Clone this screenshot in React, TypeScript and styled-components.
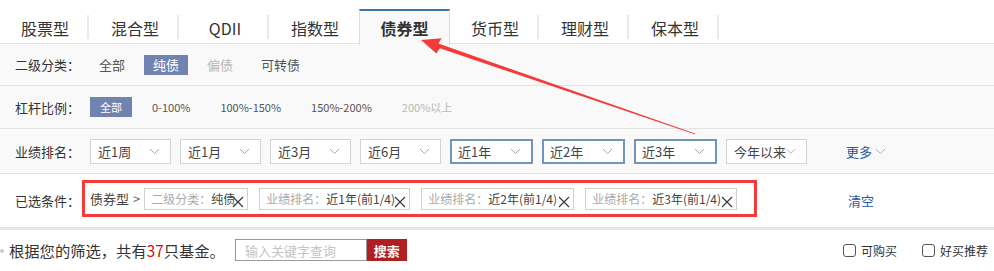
import React from 'react';
import styled, { createGlobalStyle } from 'styled-components';

const GlobalStyle = createGlobalStyle`
  body {
    margin: 0;
    background: #fff;
    font-family: "Noto Sans CJK SC", "Noto Sans", "Liberation Sans", sans-serif;
    color: #333;
  }
`;

const tabs = ['股票型', '混合型', 'QDII', '指数型', '债券型', '货币型', '理财型', '保本型'];
const activeTab = 4;

const subTypes = [
  { text: '全部' },
  { text: '纯债', active: true },
  { text: '偏债', disabled: true },
  { text: '可转债' },
];

const levers = [
  { text: '全部', active: true },
  { text: '0-100%' },
  { text: '100%-150%' },
  { text: '150%-200%' },
  { text: '200%以上', disabled: true },
];

const ranks = [
  { text: '近1周' },
  { text: '近1月' },
  { text: '近3月' },
  { text: '近6月' },
  { text: '近1年', active: true },
  { text: '近2年', active: true },
  { text: '近3年', active: true },
  { text: '今年以来' },
];

const chosen = [
  { label: '二级分类：', value: '纯债', width: 104 },
  { label: '业绩排名：', value: '近1年(前1/4)', width: 151 },
  { label: '业绩排名：', value: '近2年(前1/4)', width: 153 },
  { label: '业绩排名：', value: '近3年(前1/4)', width: 152 },
];

function Chevron({ color = '#aaa' }: { color?: string }) {
  return (
    <svg width="11" height="7" viewBox="0 0 11 7">
      <path d="M1 1 L5.5 5.5 L10 1" fill="none" stroke={color} strokeWidth="1" />
    </svg>
  );
}

function Cross() {
  return (
    <svg width="12" height="12" viewBox="0 0 12 12">
      <path d="M1 1 L11 11 M11 1 L1 11" stroke="#333" strokeWidth="1.1" />
    </svg>
  );
}

function App() {
  return (
    <Page>
      <GlobalStyle />
      <Tabs>
        {tabs.map((t, i) => (
          <Tab key={t} $active={i === activeTab} $beforeActive={i === activeTab - 1}>
            {t}
          </Tab>
        ))}
      </Tabs>

      <Panel>
        <Row $h={42}>
          <Label>二级分类：</Label>
          {subTypes.map((o) => (
            <Option key={o.text} $active={o.active} $disabled={o.disabled}>
              {o.text}
            </Option>
          ))}
        </Row>
        <Row $h={43}>
          <Label>杠杆比例：</Label>
          {levers.map((o) => (
            <Option key={o.text} $small $active={o.active} $disabled={o.disabled}>
              {o.text}
            </Option>
          ))}
        </Row>
        <Row $h={45}>
          <Label>业绩排名：</Label>
          <Selects>
            {ranks.map((r) => (
              <Select key={r.text} $active={r.active}>
                <span>{r.text}</span>
                <Chevron />
              </Select>
            ))}
          </Selects>
          <More>
            更多 <Chevron color="#9fb2cc" />
          </More>
        </Row>
      </Panel>

      <ChosenRow>
        <Label>已选条件：</Label>
        <ChosenBox>
          <Crumb>债券型</Crumb>
          <Arrow>&gt;</Arrow>
          {chosen.map((c) => (
            <ChosenTag key={c.value} $w={c.width}>
              <TagLabel>{c.label}</TagLabel>
              <TagValue>{c.value}</TagValue>
              <TagClose>
                <Cross />
              </TagClose>
            </ChosenTag>
          ))}
        </ChosenBox>
        <Clear>清空</Clear>
      </ChosenRow>

      <Divider />

      <ResultRow>
        <Dot />
        <Summary>
          根据您的筛选，共有<Count>37</Count>只基金。
        </Summary>
        <SearchInput placeholder="输入关键字查询" />
        <SearchButton>搜索</SearchButton>
        <Checks>
          <Check>
            <Box /> 可购买
          </Check>
          <Check>
            <Box /> 好买推荐
          </Check>
        </Checks>
      </ResultRow>

      <Annotation width="994" height="271" viewBox="0 0 994 271">
        <polygon
          points="695,133.6 695.4,134.6 439.8,48.2 436.4,53.5 421,40 441.6,38.3 438.4,43.6"
          fill="#f53a3a"
        />
      </Annotation>
    </Page>
  );
}
export default App;

const Page = styled.div`
  position: relative;
  width: 994px;
  height: 271px;
  overflow: hidden;
`;

const Tabs = styled.div`
  display: flex;
  height: 44px;
  padding-top: 9px;
  box-sizing: border-box;
  border-bottom: 1px solid #e2e2e2;
`;

const Tab = styled.div<{ $active?: boolean; $beforeActive?: boolean }>`
  position: relative;
  width: ${(p) => (p.$active ? '91px' : '90px')};
  margin-left: ${(p) => (p.$active ? '-1px' : '0')};
  height: ${(p) => (p.$active ? '36px' : '35px')};
  box-sizing: border-box;
  display: flex;
  align-items: center;
  justify-content: center;
  font-size: 16px;
  color: #333;
  font-weight: ${(p) => (p.$active ? 'bold' : 'normal')};
  background: ${(p) => (p.$active ? '#f9f9f9' : 'transparent')};
  border-top: ${(p) => (p.$active ? '2px solid #3a75ad' : '2px solid transparent')};
  border-left: ${(p) => (p.$active ? '1px solid #dcdcdc' : 'none')};
  border-right: ${(p) => (p.$active ? '1px solid #dcdcdc' : 'none')};
  &::after {
    content: '';
    display: ${(p) => (p.$active || p.$beforeActive ? 'none' : 'block')};
    position: absolute;
    right: 1px;
    top: 4px;
    bottom: 5px;
    width: 2px;
    background: #e9e9e9;
  }
`;

const Panel = styled.div`
  background: #f9f9f9;
`;

const Row = styled.div<{ $h: number }>`
  display: flex;
  align-items: center;
  height: ${(p) => p.$h}px;
  box-sizing: border-box;
  border-bottom: 1px solid #e3e3e3;
`;

const Label = styled.div`
  width: 90px;
  padding-left: 15px;
  box-sizing: border-box;
  font-size: 13px;
  color: #333;
  flex-shrink: 0;
`;

const Option = styled.span<{ $active?: boolean; $disabled?: boolean; $small?: boolean }>`
  display: inline-flex;
  align-items: center;
  height: 20px;
  padding: 0 ${(p) => (p.$small ? '10px' : '9px')};
  margin-right: 10px;
  font-size: ${(p) => (p.$small ? '11px' : '13px')};
  color: ${(p) => (p.$active ? '#fff' : p.$disabled ? '#b8b8b8' : '#555')};
  background: ${(p) => (p.$active ? '#7184b1' : 'transparent')};
`;

const Selects = styled.div`
  display: flex;
  gap: 9px;
`;

const Select = styled.div<{ $active?: boolean }>`
  width: ${(p) => (p.$active ? '83px' : '81px')};
  height: 25px;
  box-sizing: border-box;
  display: flex;
  align-items: center;
  justify-content: space-between;
  padding: 0 10px 0 ${(p) => (p.$active ? '6px' : '7px')};
  background: #fff;
  border: ${(p) => (p.$active ? '2px solid #7295bb' : '1px solid #d3d3d3')};
  font-size: 13px;
  white-space: nowrap;
  color: #444;
`;

const More = styled.span`
  margin-left: 39px;
  display: flex;
  align-items: center;
  gap: 3px;
  font-size: 13px;
  color: #285a9e;
`;

const ChosenRow = styled.div`
  display: flex;
  align-items: center;
  height: 52px;
  background: #fff;
`;

const ChosenBox = styled.div`
  display: flex;
  align-items: center;
  flex-shrink: 0;
  width: 675px;
  height: 37px;
  margin-left: -8px;
  margin-top: -3px;
  padding-left: 5px;
  box-sizing: border-box;
  border: 3px solid #f53a3a;
`;

const Crumb = styled.span`
  flex-shrink: 0;
  white-space: nowrap;
  font-size: 13px;
  color: #444;
`;

const Arrow = styled.span`
  flex-shrink: 0;
  font-size: 13px;
  color: #666;
  margin: 0 4px 0 4px;
`;

const ChosenTag = styled.div<{ $w: number }>`
  position: relative;
  flex-shrink: 0;
  display: flex;
  align-items: center;
  width: ${(p) => p.$w}px;
  height: 22px;
  margin-right: 11px;
  padding-left: 6px;
  box-sizing: border-box;
  border: 1px solid #d0d0d0;
  font-size: 12px;
  white-space: nowrap;
`;

const TagLabel = styled.span`
  color: #aaa;
`;

const TagValue = styled.span`
  color: #444;
`;

const TagClose = styled.span`
  position: absolute;
  right: 3px;
  bottom: 1px;
  display: flex;
`;

const Clear = styled.span`
  margin-left: 91px;
  font-size: 13px;
  color: #285a9e;
`;

const Divider = styled.div`
  height: 3px;
  margin-top: 1px;
  background: #e5e5e5;
`;

const ResultRow = styled.div`
  display: flex;
  align-items: center;
  height: 40px;
`;

const Dot = styled.span`
  width: 4px;
  height: 4px;
  border-radius: 50%;
  background: #ccc;
  margin: 2px 5px 0 0;
`;

const Summary = styled.span`
  font-size: 15.3px;
  color: #333;
`;

const Count = styled.span`
  color: #d00;
`;

const SearchInput = styled.input`
  width: 132px;
  height: 22px;
  box-sizing: border-box;
  margin-left: 10px;
  padding: 0 9px;
  border: 1px solid #9a9a9a;
  font-family: inherit;
  font-size: 13px;
  outline: none;
  &::placeholder {
    color: #c4c4c4;
  }
`;

const SearchButton = styled.button`
  width: 40px;
  height: 22px;
  border: none;
  padding: 0;
  background: #b02023;
  color: #fff;
  font-family: inherit;
  font-size: 13px;
  font-weight: bold;
`;

const Checks = styled.div`
  margin-left: auto;
  margin-right: 6px;
  display: flex;
  gap: 25px;
`;

const Check = styled.label`
  display: flex;
  align-items: center;
  gap: 5px;
  font-size: 12px;
  color: #333;
`;

const Box = styled.span`
  width: 11px;
  height: 11px;
  border: 1px solid #555;
  border-radius: 3px;
  background: #fff;
`;

const Annotation = styled.svg`
  position: absolute;
  left: 0;
  top: 0;
  pointer-events: none;
`;
